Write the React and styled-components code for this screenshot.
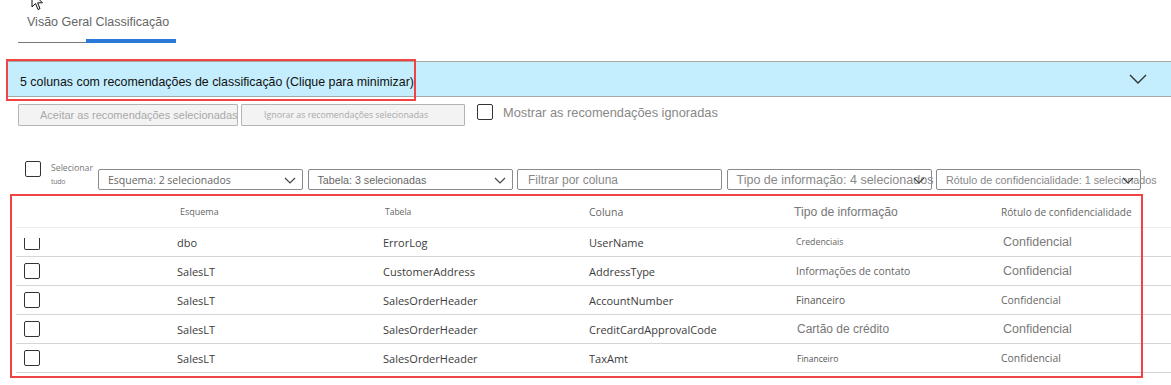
import React from 'react';
import styled, { createGlobalStyle } from 'styled-components';

const SEGOE = `"Open Sans", "Noto Sans", sans-serif`;
const ARIAL = `"Liberation Sans", Arial, sans-serif`;

const GlobalStyle = createGlobalStyle`
  html, body { margin: 0; padding: 0; background: #fff; }
  body { font-family: ${ARIAL}; }
  * { box-sizing: border-box; }
`;

const Page = styled.div`
  position: relative;
  width: 1171px;
  height: 385px;
  overflow: hidden;
  background: #fff;
`;

const Cursor = styled.svg`
  position: absolute;
  left: 31px;
  top: -9px;
`;

const TabBar = styled.nav`
  display: flex;
  flex-direction: column;
  align-items: flex-start;
  height: 43px;
  padding-left: 18px;
`;

const TabLabel = styled.div`
  margin: 14px 0 0 9px;
  font: 12.5px/16px ${ARIAL};
  color: #666;
`;

const TabIndicator = styled.div`
  display: flex;
  align-items: flex-end;
  margin-top: 9px;
`;

const TabSegment = styled.span`
  display: block;
  width: ${(p) => p.$w}px;
  height: ${(p) => (p.$active ? 4 : 1)}px;
  background: ${(p) => (p.$active ? '#2b79d6' : '#777')};
`;

const Banner = styled.div`
  position: relative;
  display: flex;
  align-items: center;
  justify-content: space-between;
  height: 36px;
  margin: 18px 0 0 6px;
  padding: 0 24px 0 14px;
  background: #c4eefd;
  border-top: 1px solid #a7a7a7;
  border-bottom: 1px solid #a7a7a7;
  cursor: pointer;
`;

const BannerText = styled.span`
  padding-top: 6px;
  font: 12.4px/15px ${ARIAL};
  color: #111;
  white-space: nowrap;
`;

const Highlight = styled.div`
  position: absolute;
  left: ${(p) => p.$left}px;
  top: ${(p) => p.$top}px;
  width: ${(p) => p.$w}px;
  height: ${(p) => p.$h}px;
  border: 2px solid #f04343;
  pointer-events: none;
`;

const ActionRow = styled.div`
  display: flex;
  align-items: flex-start;
  height: 22px;
  margin: 7px 0 0 18px;
`;

const ActionButton = styled.button`
  width: ${(p) => p.$w}px;
  height: 22px;
  margin: 0 3px 0 0;
  padding: 0 0 0 ${(p) => p.$pad}px;
  text-align: left;
  background: #f3f3f3;
  border: 1px solid #b3b3b3;
  border-radius: 1px;
  color: #a9a9a9;
  font-family: ${(p) => (p.$segoe ? SEGOE : ARIAL)};
  font-size: ${(p) => p.$size}px;
  white-space: nowrap;
  overflow: hidden;
`;

const Toggle = styled.label`
  display: flex;
  align-items: center;
  gap: 10px;
  margin: -2px 0 0 9px;
  font: 12.8px/16px ${ARIAL};
  color: #888;
`;

const ToggleText = styled.span`
  padding-top: 3px;
`;

const Box = styled.span`
  display: block;
  flex: none;
  width: 16px;
  height: ${(p) => (p.$clipped ? 12 : 16)}px;
  border: 1px solid #333;
  border-top: ${(p) => (p.$clipped ? 'none' : '1px solid #333')};
  border-radius: ${(p) => (p.$clipped ? '0 0 2px 2px' : '2px')};
  background: #fff;
`;

const FilterRow = styled.div`
  display: flex;
  align-items: flex-start;
  margin-top: 35px;
  height: 29px;
`;

const SelectAll = styled.div`
  display: flex;
  align-items: flex-start;
  gap: 10px;
  width: 98px;
  padding-left: 25px;
`;

const SelectAllText = styled.div`
  display: flex;
  flex-direction: column;
  margin-top: 1px;
  color: #777;
  font-family: ${SEGOE};
`;

const SmallLine = styled.span`
  font-size: ${(p) => p.$size}px;
  line-height: 12px;
  margin-top: ${(p) => p.$gap || 0}px;
  letter-spacing: ${(p) => p.$ls || 0}px;
`;

const Filters = styled.div`
  display: flex;
  gap: 4.5px;
  margin-top: 8px;
`;

const Select = styled.div`
  position: relative;
  display: flex;
  align-items: center;
  width: 205px;
  height: 21px;
  padding-left: 9px;
  border: 1px solid #8a8a8a;
  border-radius: 2px;
  background: #fff;
`;

const SelectText = styled.span`
  font-family: ${(p) => (p.$segoe ? SEGOE : ARIAL)};
  font-size: ${(p) => p.$size}px;
  color: ${(p) => p.$color};
  white-space: nowrap;
`;

const Chevron = styled.svg`
  position: absolute;
  right: 6px;
  top: 7px;
`;

const FilterInput = styled.input`
  width: 205px;
  height: 21px;
  padding: 0 0 0 10px;
  border: 1px solid #8a8a8a;
  border-radius: 2px;
  font: 12px ${ARIAL};
  outline: none;
  &::placeholder { color: #888; }
`;

const Table = styled.div`
  position: relative;
  margin: 6px 0 0 16px;
`;

const Row = styled.div`
  display: grid;
  grid-template-columns: 161px 206px 206px 205px 207px 1fr;
  align-items: center;
  height: ${(p) => (p.$header ? 32 : 29)}px;
  border-bottom: 1px solid ${(p) => (p.$header ? '#ebebeb' : '#d5d5d5')};
`;

const Cell = styled.div`
  padding-left: ${(p) => p.$shift || 0}px;
  font-family: ${(p) => (p.$arial ? ARIAL : SEGOE)};
  font-size: ${(p) => p.$size || 11}px;
  color: ${(p) => p.$color || '#3c3c3c'};
  white-space: nowrap;
`;

const CheckCell = styled.div`
  padding: ${(p) => (p.$clipped ? '3px' : '0')} 0 0 8px;
`;

const SmallChevron = () => (
  <Chevron width="12" height="7" viewBox="0 0 12 7">
    <path d="M1 1 L6 6 L11 1" fill="none" stroke="#444" strokeWidth="1.2" />
  </Chevron>
);

const headers = [
  { t: 'Esquema', size: 9, shift: 3 },
  { t: 'Tabela', size: 8.5, shift: 2 },
  { t: 'Coluna', size: 10.5, shift: 0 },
  { t: 'Tipo de informação', size: 12.2, arial: true, color: '#777' },
  { t: 'Rótulo de confidencialidade', size: 10.1 },
];

const BIG = { t: 'Confidencial', size: 12.5, arial: true, color: '#7a7a7a', shift: 2 };
const SMALL = { t: 'Confidencial', size: 10.4, color: '#666', shift: 0 };

const rows = [
  { schema: 'dbo', table: 'ErrorLog', column: 'UserName', info: { t: 'Credenciais', size: 8.8, color: '#666', shift: 2 }, label: BIG, clipped: true },
  { schema: 'SalesLT', table: 'CustomerAddress', column: 'AddressType', info: { t: 'Informações de contato', size: 10.3, color: '#666', shift: 2 }, label: BIG },
  { schema: 'SalesLT', table: 'SalesOrderHeader', column: 'AccountNumber', info: { t: 'Financeiro', size: 10.1, color: '#555', shift: 2 }, label: SMALL },
  { schema: 'SalesLT', table: 'SalesOrderHeader', column: 'CreditCardApprovalCode', info: { t: 'Cartão de crédito', size: 12, arial: true, color: '#777', shift: 3 }, label: BIG },
  { schema: 'SalesLT', table: 'SalesOrderHeader', column: 'TaxAmt', info: { t: 'Financeiro', size: 8.5, color: '#555', shift: 3 }, label: SMALL },
];

export default function App() {
  return (
    <Page>
      <GlobalStyle />
      <Cursor width="13" height="20" viewBox="0 0 13 20">
        <path d="M1 1 L1 16 L4.5 12.5 L7 18.5 L9 17.6 L6.6 11.8 L11.4 11.8 Z" fill="#fff" stroke="#111" strokeWidth="1" />
      </Cursor>

      <TabBar>
        <TabLabel>Visão Geral Classificação</TabLabel>
        <TabIndicator>
          <TabSegment $w={68} />
          <TabSegment $w={90} $active />
        </TabIndicator>
      </TabBar>

      <Banner>
        <BannerText>5 colunas com recomendações de classificação (Clique para minimizar)</BannerText>
        <svg width="18" height="10" viewBox="0 0 18 10">
          <path d="M1 1 L9 9 L17 1" fill="none" stroke="#333" strokeWidth="1.4" />
        </svg>
        <Highlight $left={0} $top={-3} $w={410} $h={42} />
      </Banner>

      <ActionRow>
        <ActionButton $w={220} $pad={21} $size={11}>Aceitar as recomendações selecionadas</ActionButton>
        <ActionButton $w={224} $pad={22} $size={8.8} $segoe>Ignorar as recomendações selecionadas</ActionButton>
        <Toggle>
          <Box />
          <ToggleText>Mostrar as recomendações ignoradas</ToggleText>
        </Toggle>
      </ActionRow>

      <FilterRow>
        <SelectAll>
          <Box />
          <SelectAllText>
            <SmallLine $size={8.7}>Selecionar</SmallLine>
            <SmallLine $size={7} $gap={2} $ls={-0.3}>tudo</SmallLine>
          </SelectAllText>
        </SelectAll>
        <Filters>
          <Select>
            <SelectText $segoe $size={10.5} $color="#666">Esquema: 2 selecionados</SelectText>
            <SmallChevron />
          </Select>
          <Select>
            <SelectText $size={10.7} $color="#666">Tabela: 3 selecionadas</SelectText>
            <SmallChevron />
          </Select>
          <FilterInput placeholder="Filtrar por coluna" />
          <Select>
            <SelectText $size={12.5} $color="#888">Tipo de informação: 4 selecionados</SelectText>
            <SmallChevron />
          </Select>
          <Select>
            <SelectText $size={10.8} $color="#888">Rótulo de confidencialidade: 1 selecionados</SelectText>
            <SmallChevron />
          </Select>
        </Filters>
      </FilterRow>

      <Table>
        <Row $header>
          <span />
          {headers.map((h) => (
            <Cell key={h.t} $size={h.size} $shift={h.shift} $arial={h.arial} $color={h.color || '#666'}>
              {h.t}
            </Cell>
          ))}
        </Row>
        {rows.map((r, i) => (
          <Row key={i}>
            <CheckCell $clipped={r.clipped}>
              <Box $clipped={r.clipped} />
            </CheckCell>
            <Cell>{r.schema}</Cell>
            <Cell>{r.table}</Cell>
            <Cell>{r.column}</Cell>
            <Cell $size={r.info.size} $color={r.info.color} $arial={r.info.arial} $shift={r.info.shift}>
              {r.info.t}
            </Cell>
            <Cell $size={r.label.size} $color={r.label.color} $arial={r.label.arial} $shift={r.label.shift}>
              {r.label.t}
            </Cell>
          </Row>
        ))}
        <Highlight $left={-6} $top={-2} $w={1133} $h={184} />
      </Table>
    </Page>
  );
}
